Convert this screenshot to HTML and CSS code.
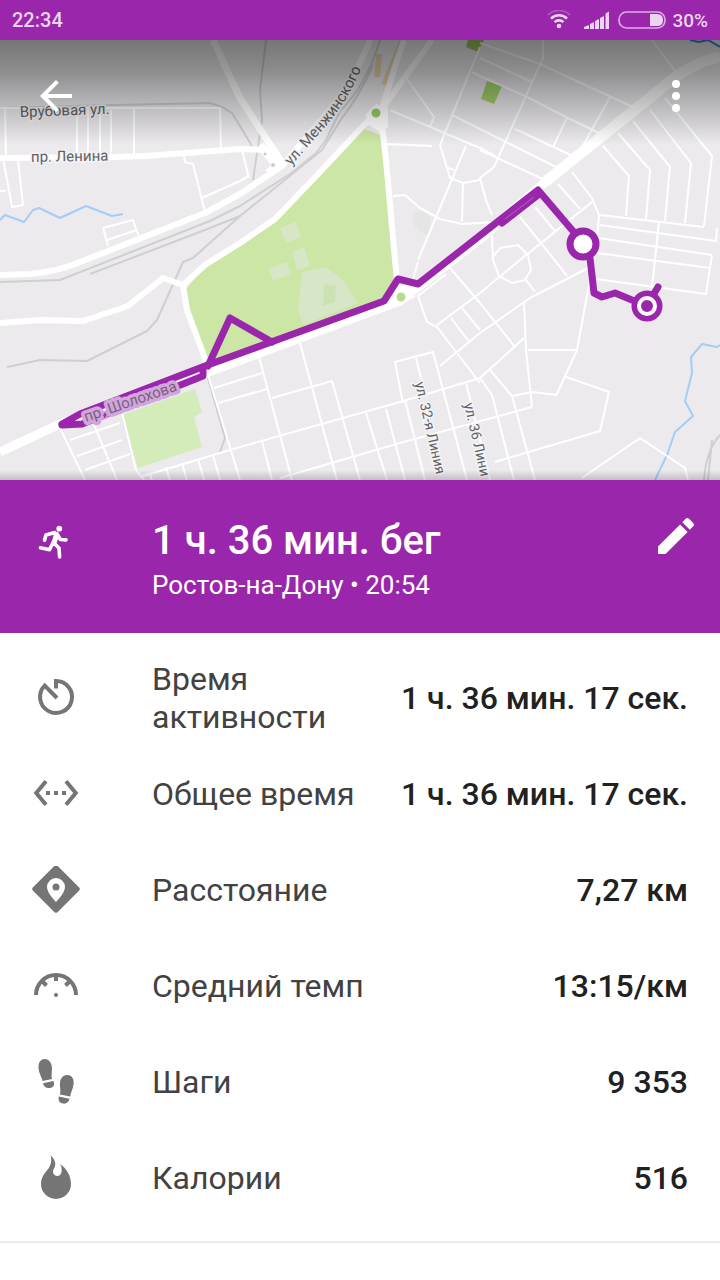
FILE: index.html
```html
<!DOCTYPE html>
<html lang="ru">
<head>
<meta charset="utf-8">
<meta name="viewport" content="width=device-width, initial-scale=1">
<title>1 ч. 36 мин. бег</title>
<link rel="stylesheet" href="styles.css">
</head>
<body>
<div class="status">
  <span class="clock">22:34</span>
  <div class="status-icons">
    <svg class="wifi" viewBox="0 0 26 20" aria-hidden="true">
      <circle cx="13" cy="16" r="2.3" fill="#ecd5f0"/>
      <g fill="none" stroke="#ecd5f0" stroke-width="2.6">
        <path d="M8.600 12.200a6.200 6.200 0 0 1 8.800 0"/>
        <path d="M5 8.600a11.300 11.300 0 0 1 16 0"/>
        <path d="M1.800 5a15.800 15.800 0 0 1 22.400 0" stroke-width="1.6" opacity=".3"/>
      </g>
    </svg>
    <svg class="signal" viewBox="0 0 26 18" aria-hidden="true">
      <path fill="#ecd5f0" d="M0 18v-2l5-2v4zM6 18v-5l4-2v7zM11 18v-8l4-2v10zM16 18V7l4-2v13zM21.500 18V2.500l3.500-2V18z"/>
    </svg>
    <svg class="battery" viewBox="0 0 48 18" aria-hidden="true">
      <rect x="1" y="1" width="46" height="16" rx="7.500" fill="none" stroke="#dcaee4" stroke-width="1.6"/>
      <path fill="#ecd5f0" d="M32 3h7q6 0 6 6t-6 6h-7z"/>
    </svg>
    <span class="charge">30%</span>
  </div>
</div>

<section class="map">
  <svg class="map-art" viewBox="0 40 720 440" role="img" aria-label="Маршрут на карте">
    <defs>
      <linearGradient id="top" x1="0" y1="0" x2="0" y2="1">
        <stop offset="0" stop-opacity=".5"/>
        <stop offset=".3" stop-opacity=".4"/>
        <stop offset="1" stop-opacity="0"/>
      </linearGradient>
      <linearGradient id="bottom" x1="0" y1="0" x2="0" y2="1">
        <stop offset="0" stop-opacity="0"/>
        <stop offset="1" stop-opacity=".18"/>
      </linearGradient>
      <path id="menzh" d="M291 166L326 126Q352 96 366 56"/>
    </defs>
    <rect y="40" width="720" height="440" fill="#eceaed"/>

    <path fill="#cce7a5" d="M362 128L380 135L383 150L396 260L393 285L385 300L208 366L187 312V288L205 267L240 245L275 222L340 155z"/>
    <path fill="#d4ebba" d="M122 415L195 389L202 412L194 417L202 447L138 468z"/>
    <path fill="#d6e6c6" d="M280 228L296 222L301 237L286 243zM292 252L304 247L310 266L297 270zM268 269L287 262L291 274L273 281zM302 272L326 267L343 280L358 303L303 325L298 310z"/>
    <path fill="#cce2b3" d="M324 284l12 2-1 16-12 4z"/>
    <path fill="#e4e6e4" d="M413 215q12-10 18 4l-3 16q-16-4-15-20z"/>
    <path fill="#a5d46c" d="M487 81L502 86L494 104L481 99z"/>
    <path fill="#9cc45e" d="M468 40h16l-6 12-12-5z"/>
    <path fill="none" stroke="#e6d3ae" stroke-width="6" d="M379 54l-2 23M403 40l-19 45"/>

    <g class="rail">
      <path d="M0 108L115 105L210 103L222 107L232 113L240 126L252 146"/>
      <path d="M266 40L260 90L262 120L253 180"/>
      <path d="M380 40Q366 86 340 111L326 140L316 153L290 174L240 206L210 221L60 280L0 282"/>
      <path d="M373 65Q360 95 342 118L322 150L240 216L210 228L90 274"/>
      <path d="M240 216L193 258L183 262L157 320L147 331L87 361L40 360L7 367"/>
      <path d="M208 378L225 438L220 452M720 435Q706 451 704 480M712 440L708 480"/>
    </g>
    <g class="water">
      <path d="M0 220L5 215L24 222L33 210L39 208L60 218L86 206L112 216L123 214"/>
      <path d="M720 345L717 347L702 344L691 357L692 373L685 401L693 416L675 432L667 455L655 480"/>
      <path d="M690 40l9 2 9-2 12 7" stroke="#3f83d0"/>
    </g>

    <g class="lane">
      <path d="M0 108H220M5 108L6 158M77 110V156M88 110V156M100 110V156M111 110V156M134 108V156M220 107L221 148"/>
      <path d="M3 158L12 207L23 205L18 160M0 191H6M103 228L133 220L139 237M103 228L108 246M107 240L137 230M184 155L185 162L193 164L205 212M202 198L240 181L246 178M242 150L249 178M240 181L248 176"/>
      <path d="M390 110L480 148L495 156M386 144L432 146M407 79L434 117L430 127M480 47L440 145L450 178L463 183L480 180M466 146L418 260M393 196L405 195L420 208L440 219L462 224L495 222M463 183L462 222M448 168L454 170M452 115L560 169M472 72L480 76"/>
      <path d="M480 43L540 64L635 108M480 58L532 82M480 76L525 96L568 118L605 136M543 40V58L494 167L480 178L486 200L492 215M610 97L575 160M567 118L553 147M515 129L575 157M480 150L545 180M652 40L678 75"/>
      <path d="M665 98L712 156L704 226M650 110L691 163L685 223M633 121L670 167L665 221M618 133L650 170L646 220M603 146L629 176L626 216M600 215L704 227M572 172L592 198L599 215L597 240L588 290"/>
      <path d="M592 202L520 260L480 293L437 325M558 184L580 209M535 207L555 231M520 217L553 258L567 276M600 225L716 241L717 228M598 238L712 255M597 253L710 268M659 222L652 288M596 279L706 294L712 255M588 268L530 298L480 333L440 366"/>
      <path d="M524 302L526 350L532 407M588 290L577 350L556 396M557 395L532 392L512 396M528 350H577M566 377L609 392L600 431L495 462M480 303L515 347M524 338L480 378M492 236L493 260L499 276L512 283L525 280L531 270L528 255L518 245L500 248L492 258M526 280L535 292M490 370L512 396L535 480M480 378L492 395L514 480M582 478L640 438L685 468L688 480"/>
      <path d="M450 268L480 303M418 296L427 322L437 327L480 383M451 318L470 343M462 308L480 330M403 403L395 362L433 352L467 480M416 358L422 382M140 477L240 447L400 402L480 378M532 407L400 443L280 478M300 343L337 480M258 353L292 480M272 398L332 381L360 480M214 388L262 373M218 403L267 389M366 413L387 480M386 409L405 480M405 400L425 480M262 441L272 480M466 383L490 480M418 262L413 280"/>
      <path d="M60 428L85 480M92 420L117 480M122 412L136 470L144 480M70 440L120 423M77 456L122 440M85 470L130 454M208 375L240 480M150 473l2 8M166 467l4 14M182 463l5 18M198 459l6 21M213 455l7 25M418 296l28-22"/>
    </g>
    <g class="road">
      <path d="M0 158L115 157L145 156L240 149L268 150"/>
      <path d="M213 40L240 98L282 163" stroke-width="7"/>
      <path d="M370 40Q352 86 318 124L282 166L240 194L205 213L80 262Q60 271 30 274L0 275"/>
      <path d="M0 323L40 320L83 321L128 306L163 278L183 285L205 265L240 243L275 219L320 172L365 124L381 112L397 60L404 40"/>
      <path d="M183 285L187 310L207 364M384 106L432 40M381 116L386 160L395 260L398 290" />
      <path d="M260 145L280 170M268 173L283 160" stroke-width="8"/>
    </g>
    <g fill="none" stroke="#fff">
      <path stroke-width="11" d="M720 57Q690 63 662 88L545 182" opacity=".85"/>
      <path stroke-width="9" d="M600 138L545 182L480 239L400 301L225 366L60 424L0 452"/>
      <path stroke-width="16" d="M390 300L412 290"/>
    </g>
    <path fill="#fff" d="M366 114l10-10 12 3v20l-8 5-13-8z"/>
    <circle cx="376" cy="113" r="4.500" fill="#99cb66"/>
    <circle cx="401" cy="297" r="4.500" fill="#b9dc90"/>
    <circle cx="265" cy="154" r="1.500" fill="#ccc"/>
    <circle cx="273" cy="165" r="2" fill="#ccc"/>

    <text class="place" x="20" y="117" transform="rotate(-2 20 117)">Врубовая ул.</text>
    <text class="place" x="31" y="162" transform="rotate(-1 31 162)">пр. Ленина</text>
    <text class="place"><textPath href="#menzh">ул. Менжинского</textPath></text>
    <text class="place small" transform="translate(415 383) rotate(77)">ул. 32-я Линия</text>
    <text class="place small" transform="translate(464 404) rotate(77)">ул. 36 Лини</text>

    <g class="track">
      <path d="M62 424L80 414L205 366L384 301L398 279L418 284L538 190L584 244L590 258L594 293L602 297L615 293L632 300L647 305L658 287"/>
      <path d="M208 366L230 318L272 342M538 195L502 223M203 368V376L125 407L82 424L62 425"/>
      <circle cx="583" cy="244" r="13" fill="#fff"/>
      <circle cx="647" cy="306" r="15.500" fill="#9a27ab" stroke="none"/>
      <circle cx="647" cy="306" r="8" fill="#9a27ab" stroke="#fff" stroke-width="4"/>
    </g>
    <path fill="none" stroke="#b45fc2" d="M505 219L534 197"/>
    <text class="place on-track" transform="translate(86 422) rotate(-19)">пр. Шолохова</text>

    <rect y="40" width="720" height="105" fill="url(#top)"/>
    <rect y="470" width="720" height="10" fill="url(#bottom)"/>
  </svg>
  <div class="toolbar">
    <button class="icon-button" type="button" aria-label="Назад">
      <svg viewBox="0 0 24 24"><path d="M20 11H7.830l5.590-5.590L12 4l-8 8 8 8 1.410-1.410L7.830 13H20z"/></svg>
    </button>
    <button class="icon-button" type="button" aria-label="Ещё">
      <svg viewBox="0 0 24 24"><circle cx="12" cy="6" r="2"/><circle cx="12" cy="12" r="2"/><circle cx="12" cy="18" r="2"/></svg>
    </button>
  </div>
</section>

<header class="summary">
  <svg class="run" viewBox="0 0 24 24" aria-hidden="true"><path d="M15.500 5a1.900 1.900 0 1 0 0-3.800 1.900 1.900 0 0 0 0 3.800z"/><path class="limbs" d="M5.700 10.800L6.600 7.300L12.500 5.700M14 6.500L16.200 10.300L20 10.600M3 15.900L9 17.200L11.300 12.500M12 12.700L15.400 16.200L15.700 22"/><path d="M10.800 5.500L14 5.300L15.300 8L13.500 13.200L10.300 12.500L11.700 7.700z"/></svg>
  <div class="summary-text">
    <h1>1 ч. 36 мин. бег</h1>
    <p>Ростов-на-Дону • 20:54</p>
  </div>
  <button class="icon-button" type="button" aria-label="Изменить">
    <svg viewBox="0 0 24 24"><path d="M3 17.250V21h3.750L17.810 9.940l-3.750-3.750L3 17.250zM20.710 7.040a1 1 0 0 0 0-1.410l-2.340-2.340a1 1 0 0 0-1.410 0l-1.830 1.830 3.750 3.750 1.830-1.830z"/></svg>
  </button>
</header>

<dl class="stats">
  <div class="row">
    <dt>
      <svg viewBox="0 0 48 48" aria-hidden="true"><path fill="none" stroke="#757575" stroke-width="4" d="M24 14.500V7a16 16 0 1 1-11.300 4.700L25 24"/></svg>
      <span>Время активности</span>
    </dt>
    <dd>1 ч. 36 мин. 17 сек.</dd>
  </div>
  <div class="row">
    <dt>
      <svg viewBox="0 0 24 24" aria-hidden="true"><path d="M7.770 6.260L6.230 4.980.82 11.500l5.410 6.520 1.540-1.280L3.420 11.500l4.350-5.240zM7 12.500h2v-2H7v2zm10-2h-2v2h2v-2zm-6 2h2v-2h-2v2zm6.770-7.520l-1.540 1.280L20.580 11.500l-4.350 5.240 1.540 1.280L23.180 11.500l-5.410-6.520z"/></svg>
      <span>Общее время</span>
    </dt>
    <dd>1 ч. 36 мин. 17 сек.</dd>
  </div>
  <div class="row">
    <dt>
      <svg viewBox="0 0 48 48" aria-hidden="true"><path transform="translate(0 -1)" fill-rule="evenodd" d="M22.500.8q1.500-1.300 3 0L47.200 22.500q1.300 1.500 0 3L25.500 47.200q-1.500 1.300-3 0L.8 25.500q-1.300-1.500 0-3zM24 13a9 9 0 0 0-9 9c0 6 9 15 9 15s9-9 9-15a9 9 0 0 0-9-9zm0 5.500a3.500 3.500 0 1 1 0 7 3.500 3.500 0 0 1 0-7z"/></svg>
      <span>Расстояние</span>
    </dt>
    <dd>7,27 км</dd>
  </div>
  <div class="row">
    <dt>
      <svg viewBox="0 0 48 48" aria-hidden="true"><path fill="none" stroke="#757575" stroke-width="4" d="M4 33a20 20 0 0 1 40 0M24 13v6M10 19l4.500 4.500M38 19l-4.500 4.500"/><circle cx="24" cy="33" r="2"/></svg>
      <span>Средний темп</span>
    </dt>
    <dd>13:15/км</dd>
  </div>
  <div class="row">
    <dt>
      <svg viewBox="0 0 48 48" aria-hidden="true"><path d="M10.500 23C10 19 6.500 15 6.500 9C6.500 4 9 1 12.500 1C17.500 1 20 5.500 20 10.500C20 14.500 19 17.500 20 21zM11 25.300l10.500-2.300c1.500 4 0 6.500-3.500 7-3.500.6-6.300-1-7-4.700zM28 36.500C29 32 27.500 29 28 24.500C28.500 19.500 32 16.300 36 17C40.500 17.700 42.300 21.500 41.500 27C40.800 31.500 38.500 34.500 38.300 38.500zM26.800 38.500l10.700 2.300c-.5 3.500-3.500 5.400-6.500 4.800-3.500-.5-5-3.300-4.200-7.100z"/></svg>
      <span>Шаги</span>
    </dt>
    <dd>9 353</dd>
  </div>
  <div class="row">
    <dt>
      <svg viewBox="0 0 48 48" aria-hidden="true"><path d="M18.500 1C22.500 5 24 8.500 23 12.500C22.300 14.500 21 15.500 21 17.500A4.200 4.200 0 0 0 29.500 18C30 15 29.500 12 28 10C34 14 39 21 39 30A15 15 0 0 1 9 30C9 23 13 19 16.500 14.500C19 11 20 6 18.500 1z"/></svg>
      <span>Калории</span>
    </dt>
    <dd>516</dd>
  </div>
</dl>
</body>
</html>
```

FILE: styles.css
```css
* {
  box-sizing: border-box;
}

body {
  margin: 0;
  min-height: 100vh;
  background: #fff;
  color: #212121;
  font-family: Roboto, "Noto Sans", sans-serif;
}

svg {
  display: block;
}

.status {
  display: flex;
  align-items: center;
  justify-content: space-between;
  height: 40px;
  padding: 0 12px;
  background: #9a27ab;
  color: #ecd5f0;
  font-size: 20px;
  font-weight: 500;
}

.status-icons {
  display: flex;
  align-items: center;
  gap: 8px;
}

.wifi {
  width: 26px;
  height: 20px;
}

.signal {
  width: 26px;
  height: 18px;
  margin-left: 4px;
}

.battery {
  width: 48px;
  height: 18px;
}

.charge {
  margin-left: -2px;
  font-size: 19px;
}

.map {
  position: relative;
}

.map-art {
  width: 100%;
  height: auto;
}

.rail path,
.water path,
.lane path,
.road path,
.track path {
  fill: none;
  stroke-linejoin: round;
}

.rail {
  stroke: #cfced0;
  stroke-width: 2;
}

.water {
  stroke: #a3cdf5;
  stroke-width: 2;
}

.lane {
  stroke: #fff;
  stroke-width: 2;
}

.road {
  stroke: #fff;
  stroke-width: 6;
}

.track {
  stroke: #9a27ab;
  stroke-width: 7;
  stroke-linecap: round;
}

.place {
  fill: #626165;
  stroke: #f4f3f5;
  stroke-width: 3;
  paint-order: stroke;
  font-size: 15px;
}

.small {
  font-size: 14px;
}

.on-track {
  fill: #76627a;
  stroke: #d3a5dc;
  stroke-width: 7;
  stroke-linejoin: round;
}

.toolbar {
  position: absolute;
  top: 32px;
  left: 0;
  right: 0;
  display: flex;
  justify-content: space-between;
  padding: 0 20px 0 32px;
}

.icon-button {
  flex: none;
  width: 48px;
  height: 48px;
  padding: 0;
  border: 0;
  background: none;
}

.icon-button svg {
  width: 48px;
  height: 48px;
  fill: #fff;
}

.summary {
  display: flex;
  align-items: flex-start;
  padding: 32px 20px 30px 36px;
  background: #9a27ab;
  color: #fff;
}

.run {
  flex: none;
  width: 36px;
  height: 36px;
  margin-top: 12px;
  fill: #fff;
}

.limbs {
  fill: none;
  stroke: #fff;
  stroke-width: 2.400;
  stroke-linecap: round;
  stroke-linejoin: round;
}

.summary-text {
  flex: 1;
  padding-left: 80px;
}

h1 {
  margin: 0;
  padding-top: 4px;
  font-size: 40px;
  font-weight: 500;
  line-height: 50px;
}

.summary p {
  margin: 0;
  padding-top: 1px;
  font-size: 26px;
  line-height: 36px;
}

.stats {
  margin: 0;
  padding: 17px 0 15px;
  border-bottom: 2px solid #ebebeb;
}

.row {
  display: flex;
  align-items: center;
  justify-content: space-between;
  min-height: 96px;
  padding: 0 32px;
  font-size: 32px;
  line-height: 38px;
}

dt {
  display: flex;
  flex: 1;
  align-items: center;
  gap: 72px;
  color: #424242;
}

dt svg {
  flex: none;
  width: 48px;
  height: 48px;
  fill: #757575;
}

dd {
  flex: none;
  margin: 0 0 0 32px;
  font-weight: 500;
}
```
